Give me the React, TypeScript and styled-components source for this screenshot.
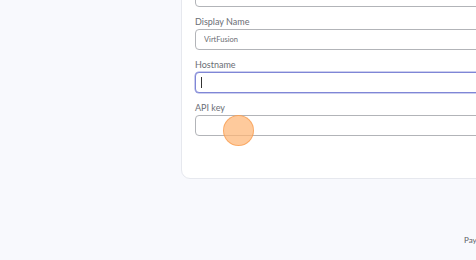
import React from "react";
import styled, { createGlobalStyle } from "styled-components";

const GlobalStyle = createGlobalStyle`
  html, body {
    margin: 0;
    padding: 0;
    background: #f8f9fd;
    overflow: hidden;
    font-family: Lato, "Noto Sans", sans-serif;
  }
`;

const Page = styled.div`
  position: relative;
  width: 476px;
  height: 260px;
  overflow: hidden;
  display: flex;
  flex-direction: column;
`;

const Card = styled.div`
  margin: -29px 0 0 181px;
  width: 340px;
  background: #ffffff;
  border: 1px solid #e6e8ee;
  border-radius: 0 0 9px 9px;
  padding: 0 0 42px 13px;
  display: flex;
  flex-direction: column;
  gap: 8px;
`;

const Field = styled.div`
  display: flex;
  flex-direction: column;
`;

const Label = styled.label`
  font-size: 9px;
  line-height: 14px;
  color: #6a6e75;
`;

const InputWrap = styled.div`
  position: relative;
`;

const Input = styled.input<{ $focused?: boolean }>`
  display: block;
  box-sizing: border-box;
  width: 100%;
  height: 21px;
  padding: 0 8px;
  border-radius: 4px;
  border: 1px solid ${(p) => (p.$focused ? "#7f86d6" : "#b2b4b8")};
  box-shadow: ${(p) => (p.$focused ? "0 0 0 0.5px #9aa0e0" : "none")};
  background: #fff;
  font-family: Lato, "Noto Sans", sans-serif;
  font-size: 7.5px;
  color: #6a6d73;
  outline: none;
`;

const Caret = styled.span`
  position: absolute;
  left: 6px;
  top: 5px;
  width: 1px;
  height: 11px;
  background: #333;
`;

const Footer = styled.div`
  margin-top: auto;
  padding: 0 0 15px 464px;
  font-size: 8px;
  color: #5c5f66;
  white-space: nowrap;
`;

const Touch = styled.div`
  position: absolute;
  left: 223px;
  top: 115px;
  width: 29px;
  height: 29px;
  border-radius: 50%;
  background: rgba(253, 182, 118, 0.72);
  border: 1px solid rgba(248, 150, 70, 0.65);
`;

const fields = [
  { label: "Username", value: "" },
  { label: "Display Name", value: "VirtFusion" },
  { label: "Hostname", value: "", focused: true },
  { label: "API key", value: "" },
];

export default function App() {
  return (
    <Page>
      <GlobalStyle />
      <Card>
        {fields.map((f) => (
          <Field key={f.label}>
            <Label>{f.label}</Label>
            <InputWrap>
              <Input $focused={f.focused} defaultValue={f.value} readOnly />
              {f.focused && <Caret />}
            </InputWrap>
          </Field>
        ))}
      </Card>
      <Footer>Paymenter</Footer>
      <Touch />
    </Page>
  );
}
